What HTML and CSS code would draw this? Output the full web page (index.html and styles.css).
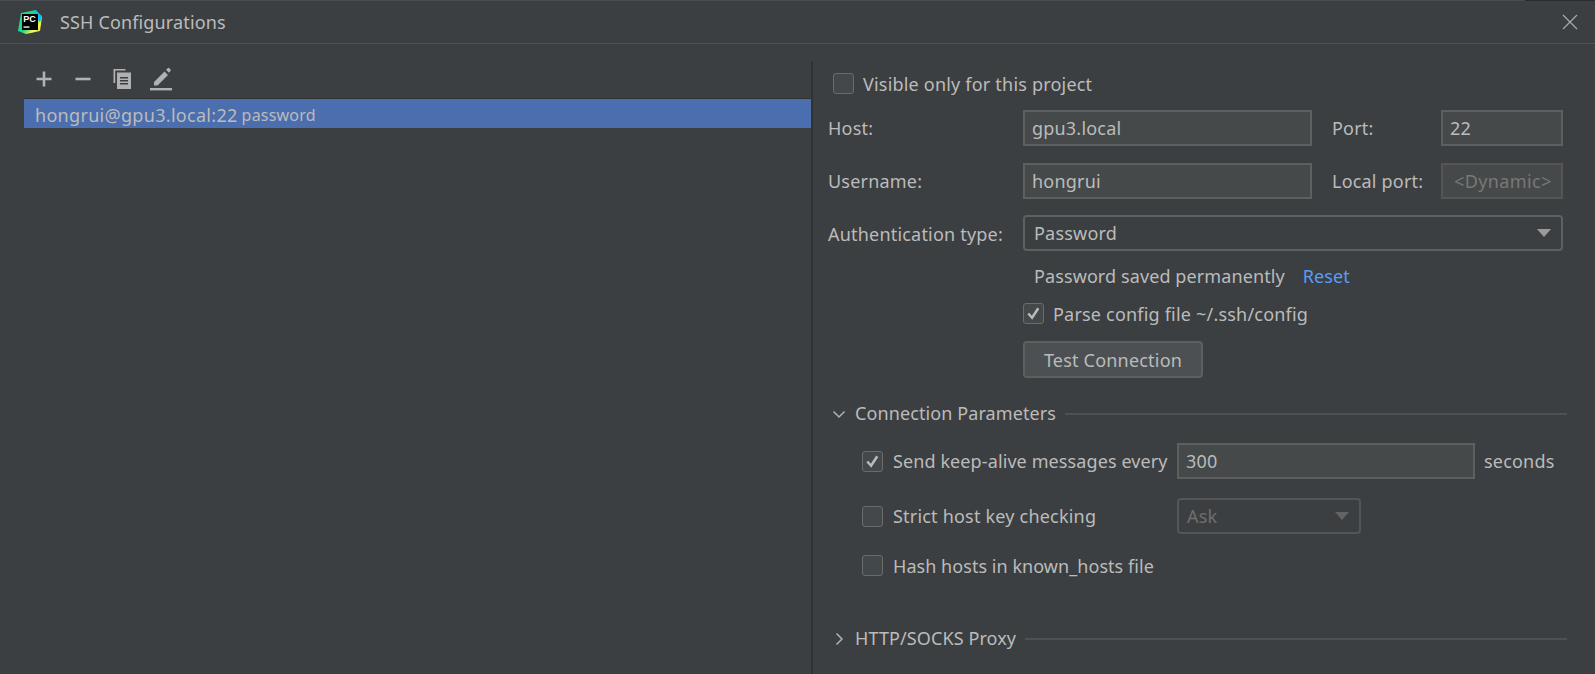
FILE: index.html
```html
<!DOCTYPE html>
<html lang="en">
<head>
<meta charset="utf-8">
<title>SSH Configurations</title>
<link rel="stylesheet" href="styles.css">
</head>
<body>
<div class="dialog">
  <header class="titlebar">
    <svg class="app-logo" viewBox="0 0 24 24" width="24" height="24">
      <defs>
        <linearGradient id="pcg" x1="0" y1="0" x2="1" y2="1">
          <stop offset="0" stop-color="#21d789"/>
          <stop offset="0.55" stop-color="#21d789"/>
          <stop offset="0.75" stop-color="#fcf84a"/>
          <stop offset="1" stop-color="#b8d43a"/>
        </linearGradient>
      </defs>
      <polygon points="3,3 18,0 24,7 22,21 8,24 0,21" fill="url(#pcg)"/>
      <polygon points="16,0 24,6 22,12 17,6" fill="#07c3f2"/>
      <rect x="4" y="4" width="16" height="16" fill="#000"/>
      <text x="5.2" y="12.4" class="logo-text">PC</text>
      <rect x="5.5" y="16.4" width="6" height="1.3" fill="#fff"/>
    </svg>
    <h1 class="title">SSH Configurations</h1>
    <svg class="close" viewBox="0 0 16 16" width="16" height="16">
      <path d="M1 1 L15 15 M15 1 L1 15" stroke="#a9a9a9" stroke-width="1.2" fill="none"/>
    </svg>
  </header>
  <main class="body">
    <section class="left">
      <div class="toolbar">
        <svg class="tool" viewBox="0 0 24 24" width="24" height="24"><path d="M12 4.5v15M4.5 12h15" stroke="#afb1b3" stroke-width="2.6" fill="none"/></svg>
        <svg class="tool" viewBox="0 0 24 24" width="24" height="24"><path d="M4.5 12h15" stroke="#afb1b3" stroke-width="2.6" fill="none"/></svg>
        <svg class="tool" viewBox="0 0 24 24" width="24" height="24"><path d="M3.5 2h12v1.6H5.2V16H3.5z" fill="#afb1b3"/><path fill-rule="evenodd" d="M7 5.5h14V22H7zM10 10v1.5h8V10zM10 13v1.5h8V13zM10 16v1.5h8V16z" fill="#afb1b3"/></svg>
        <svg class="tool" viewBox="0 0 24 24" width="24" height="24"><path d="M5 16.5 L15.5 6 L19 9.5 L8.500 20 H5z M17 4.300 L18.700 2.700 Q19.500 2 20.300 2.700 L21.500 3.900 Q22.200 4.700 21.500 5.500 L19.900 7.200z" fill="#afb1b3" transform="translate(0 -1.500)"/><rect x="1" y="21" width="22" height="2.400" fill="#afb1b3"/></svg>
      </div>
      <ul class="list">
        <li class="list-row selected"><span class="conn-name">hongrui@gpu3.local:22</span> <span class="hint">password</span></li>
      </ul>
    </section>
    <section class="right">
      <label class="check-row visible-row"><span class="check"></span>Visible only for this project</label>
      <div class="form-grid">
        <span class="label">Host:</span>
        <span class="input">gpu3.local</span>
        <span class="label side">Port:</span>
        <span class="input">22</span>
        <span class="label">Username:</span>
        <span class="input">hongrui</span>
        <span class="label side">Local port:</span>
        <span class="input disabled dynamic">&lt;Dynamic&gt;</span>
        <span class="label">Authentication type:</span>
        <span class="select auth-select">Password<i class="arrow"></i></span>
      </div>
      <div class="indent">
        <p class="saved">Password saved permanently<a class="link">Reset</a></p>
        <label class="check-row parse-row"><span class="check on"><svg viewBox="0 0 20 20" width="19" height="19"><path d="M4.500 10 L8.500 14.500 L15 4.500" stroke="#bbbbbb" stroke-width="2.600" fill="none"/></svg></span>Parse config file ~/.ssh/config</label>
        <button class="btn">Test Connection</button>
      </div>
      <div class="section-head conn">
        <svg class="chev" viewBox="0 0 14 14" width="14" height="14"><path d="M1.500 4.500 L7 10 L12.500 4.500" stroke="#afb1b3" stroke-width="1.500" fill="none"/></svg>
        <span class="head-text">Connection Parameters</span><i class="rule"></i>
      </div>
      <div class="params">
        <div class="param keep">
          <label class="check-row"><span class="check on"><svg viewBox="0 0 20 20" width="19" height="19"><path d="M4.500 10 L8.500 14.500 L15 4.500" stroke="#bbbbbb" stroke-width="2.600" fill="none"/></svg></span>Send keep-alive messages every</label>
          <span class="input seconds-input">300</span>
          <span class="unit">seconds</span>
        </div>
        <div class="param strict">
          <label class="check-row"><span class="check"></span>Strict host key checking</label>
          <span class="select disabled ask-select">Ask<i class="arrow"></i></span>
        </div>
        <div class="param hash">
          <label class="check-row"><span class="check"></span>Hash hosts in known_hosts file</label>
        </div>
      </div>
      <div class="section-head proxy">
        <svg class="chev" viewBox="0 0 14 14" width="14" height="14"><path d="M4.500 1.500 L10 7 L4.500 12.500" stroke="#afb1b3" stroke-width="1.500" fill="none"/></svg>
        <span class="head-text">HTTP/SOCKS Proxy</span><i class="rule"></i>
      </div>
    </section>
  </main>
</div>
</body>
</html>
```
FILE: styles.css
```css
* { box-sizing: border-box; }
html, body { margin: 0; height: 100%; }
body {
  background: #3c3f41;
  color: #bbbbbb;
  font-family: "Noto Sans", "Open Sans", sans-serif;
  font-size: 18px;
  letter-spacing: 0.2px;
  overflow: hidden;
}
.dialog { position: relative; width: 1595px; height: 674px; display: flex; flex-direction: column; border-top: 1px solid #4a4d4f; }
.dialog::after { content: ""; position: absolute; top: -1px; right: 0; width: 70px; height: 1px; background: #2b2b2b; }
.titlebar {
  height: 43px;
  flex: none;
  display: flex;
  align-items: center;
  padding: 0 17px 0 18px;
  border-bottom: 1px solid #515151;
}
.app-logo { flex: none; }
.logo-text { font: 700 9px "Liberation Sans", sans-serif; letter-spacing: 0; fill: #fff; }
.title { margin: 0 0 0 18px; font-size: 18px; letter-spacing: 0.15px; font-weight: 400; color: #bbbbbb; flex: 1; }
.close { flex: none; }
.body { flex: 1; display: flex; min-height: 0; padding-top: 17px; }
.left { width: 811px; flex: none; padding-left: 24px; }
.toolbar { height: 38px; display: flex; align-items: center; padding-left: 8px; gap: 15px; margin-top: -1px; }
.tool { flex: none; }
.list { list-style: none; margin: 0; padding: 0; }
.list-row { height: 30px; display: flex; align-items: center; gap: 4px; padding: 2px 0 0 11px; white-space: nowrap; }
.selected { background: #4b6eaf; border-top: 1px solid #323232; }
.conn-name { letter-spacing: 0.3px; }
.hint { font-size: 16px; }
.right { flex: 1; border-left: 2px solid #323232; padding: 0 28px 0 15px; min-width: 0; }
.check-row { display: flex; align-items: center; gap: 10px; white-space: nowrap; }
.check {
  flex: none;
  width: 21px; height: 21px;
  border: 1px solid #6b6b6b;
  border-radius: 3px;
  background: #43494a;
  display: flex; align-items: center; justify-content: center;
}
.visible-row { padding-left: 5px; height: 21px; margin-top: 12px; gap: 9px; }
.form-grid {
  display: grid;
  grid-template-columns: 195px 289px 129px 122px;
  grid-auto-rows: 36px;
  row-gap: 17px;
  margin-top: 16px;
  align-items: center;
}
.side { padding-left: 20px; }
.input, .select {
  height: 36px;
  display: flex;
  align-items: center;
  border: 2px solid #5e6060;
  background: #45494a;
  padding-left: 7px;
  white-space: nowrap;
}
.select { background: #3c3f41; border-radius: 4px; padding-left: 9px; justify-content: space-between; padding-right: 10px; }
.auth-select { grid-column: 2 / span 3; align-self: start; margin-top: -1px; }
.arrow { width: 0; height: 0; border-left: 7px solid transparent; border-right: 7px solid transparent; border-top: 8px solid #9a9a9a; flex: none; }
.disabled { color: #6e6e6e; background: #3c3f41; border-color: #555; }
.dynamic { background: #45494a; color: #787878; padding-left: 11px; letter-spacing: 0.4px; }
.disabled .arrow { border-top-color: #646464; }
.indent { padding-left: 195px; }
.saved { margin: 12px 0 0 11px; height: 24px; line-height: 24px; white-space: nowrap; letter-spacing: 0.1px; }
.link { color: #589df6; margin-left: 18px; }
.parse-row { margin-top: 15px; height: 21px; gap: 9px; }
.btn {
  display: block;
  margin-top: 17px;
  width: 180px; height: 37px;
  border: 2px solid #5e6060;
  border-radius: 4px;
  background: #4c5052;
  color: #bbbbbb;
  font: inherit;
  letter-spacing: inherit;
  padding: 0;
}
.section-head { display: flex; align-items: center; height: 24px; white-space: nowrap; }
.section-head .chev { flex: none; margin-right: 9px; }
.head-text { letter-spacing: 0.1px; margin-bottom: 3px; }
.rule { flex: 1; height: 2px; background: #505050; margin-left: 9px; }
.conn { margin-top: 24px; padding-left: 4px; }
.params { padding-left: 34px; }
.param { display: flex; align-items: center; }
.param .check-row { width: 315px; }
.keep { height: 36px; margin-top: 17px; }
.keep .check-row { letter-spacing: 0.1px; }
.seconds-input { width: 298px; }
.unit { margin-left: 9px; }
.strict { height: 36px; margin-top: 19px; }
.ask-select { width: 184px; height: 36px; padding-left: 8px; }
.hash { height: 21px; margin-top: 21px; }
.hash .check-row { letter-spacing: 0.05px; }
.proxy { margin-top: 51px; padding-left: 4px; }
```
